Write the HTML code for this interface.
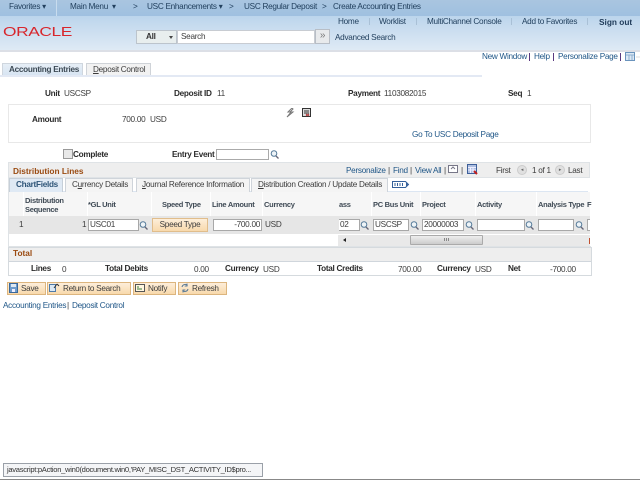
<!DOCTYPE html>
<html><head><meta charset="utf-8"><style>
html,body{margin:0;padding:0;background:#fff;width:640px;height:480px;overflow:hidden}
body{font-family:"Liberation Sans",Arial,sans-serif;font-size:8.2px;letter-spacing:-.28px;color:#3c3c3c;position:relative}
#w{position:absolute;left:0;top:0;width:640px;height:480px;overflow:hidden;filter:blur(.3px)}
.a,.t,.b,.l,.n,.i,.h{position:absolute;white-space:nowrap}
.t{line-height:10px;color:#3c3c3c}
.b{line-height:10px;font-weight:bold;color:#2b2b2b}
.l{line-height:10px;color:#1f5687}
.n{line-height:10px;color:#22405e}
.h{line-height:10px;font-weight:bold;color:#3f4a55;font-size:7.5px}
.i{height:10px;background:#fff;border:1px solid #a8a8a8;line-height:10px;font-size:8.2px;color:#3c3c3c;padding:0 1px;box-sizing:content-box}
.g{position:absolute;width:9px;height:9px}
.bt{position:absolute;height:11px;top:282px;background:linear-gradient(#fdeeda,#f8d9ac);border:1px solid #dcb57e;line-height:11px;color:#3c3c3c;box-sizing:content-box}
</style></head><body><div id="w">

<div class="a" style="left:0;top:0;width:640px;height:16px;background:linear-gradient(#a9c5e0,#9fc0e0)"></div>
<div class="a" style="left:0;top:16px;width:640px;height:34px;background:linear-gradient(#bcd5ec,#dfeaf5)"></div>
<div class="a" style="left:0;top:50px;width:640px;height:2px;background:#dcdfe6"></div>
<div class="a" style="left:56px;top:0;width:1px;height:16px;background:#c8dcee"></div>

<div class="n" style="left:9px;top:2px">Favorites ▾</div>
<div class="n" style="left:70px;top:2px">Main Menu &nbsp;▾</div>
<div class="n" style="left:133px;top:2px">&gt;</div>
<div class="n" style="left:147px;top:2px">USC Enhancements ▾</div>
<div class="n" style="left:229px;top:2px">&gt;</div>
<div class="n" style="left:244px;top:2px">USC Regular Deposit</div>
<div class="n" style="left:322px;top:2px">&gt;</div>
<div class="n" style="left:333px;top:2px">Create Accounting Entries</div>

<div class="n" style="left:338px;top:17px">Home</div>
<div class="a" style="left:369px;top:18px;width:1px;height:7px;background:#a9c0d6"></div>
<div class="n" style="left:379px;top:17px">Worklist</div>
<div class="a" style="left:416px;top:18px;width:1px;height:7px;background:#a9c0d6"></div>
<div class="n" style="left:427px;top:17px">MultiChannel Console</div>
<div class="a" style="left:511px;top:18px;width:1px;height:7px;background:#a9c0d6"></div>
<div class="n" style="left:522px;top:17px">Add to Favorites</div>
<div class="a" style="left:587px;top:18px;width:1px;height:7px;background:#a9c0d6"></div>
<div class="n" style="left:599px;top:17px;font-weight:bold;color:#1f3a58;font-size:8.3px;letter-spacing:0">Sign out</div>

<svg class="a" style="left:3px;top:26px" width="70" height="11" viewBox="0 0 70 11"><text x="0" y="10" font-family="Liberation Sans" font-size="12.5" fill="#d8262c" textLength="69" lengthAdjust="spacingAndGlyphs">ORACLE</text></svg>

<div class="a" style="left:136px;top:30px;width:41px;height:14px;background:#e8eeee;border:1px solid #bcc4cc;box-sizing:border-box"></div>
<div class="b" style="left:146px;top:32px;color:#333">All</div>
<div class="a" style="left:169px;top:36px;width:0;height:0;border-left:2.5px solid transparent;border-right:2.5px solid transparent;border-top:3px solid #444"></div>
<div class="a" style="left:177px;top:30px;width:138px;height:14px;background:#fff;border:1px solid #c8ccd2;box-sizing:border-box"></div>
<div class="t" style="left:181px;top:32px">Search</div>
<div class="a" style="left:315px;top:29px;width:15px;height:15px;background:#e8eaec;border:1px solid #b8bec6;box-sizing:border-box;color:#777;text-align:center;line-height:12px;font-size:10px">»</div>
<div class="n" style="left:335px;top:33px">Advanced Search</div>

<div class="l" style="left:482px;top:52px">New Window</div>
<div class="a" style="left:529px;top:53px;width:1px;height:8px;background:#5a3a80"></div>
<div class="l" style="left:534px;top:52px">Help</div>
<div class="a" style="left:553px;top:53px;width:1px;height:8px;background:#5a3a80"></div>
<div class="l" style="left:558px;top:52px">Personalize Page</div>
<div class="a" style="left:620px;top:53px;width:1px;height:8px;background:#5a3a80"></div>
<svg class="a" style="left:625px;top:52px" width="15" height="10"><rect x=".5" y=".5" width="9" height="8" fill="#dbe8f4" stroke="#6a94bd"/><path d="M1 3h8M4 3v5M7 3v5" stroke="#8fb0d0"/><path d="M11 5h4" stroke="#ddd"/></svg>

<div class="a" style="left:2px;top:63px;width:81px;height:13px;background:linear-gradient(#e6eef6,#d6e4f2);border:1px solid #cfd6de;border-bottom:0;box-sizing:border-box"></div>
<div class="b" style="left:9px;top:65px;color:#3d4a55">Accounting Entries</div>
<div class="a" style="left:86px;top:63px;width:65px;height:13px;background:#f2f2f2;border:1px solid #cfd3d8;border-bottom:0;box-sizing:border-box"></div>
<div class="t" style="left:93px;top:65px"><u>D</u>eposit Control</div>
<div class="a" style="left:0;top:75px;width:482px;height:2px;background:#e3e9f4"></div>

<div class="b" style="left:45px;top:89px">Unit</div><div class="t" style="left:64px;top:89px">USCSP</div>
<div class="b" style="left:174px;top:89px">Deposit ID</div><div class="t" style="left:217px;top:89px">11</div>
<div class="b" style="left:348px;top:89px">Payment</div><div class="t" style="left:384px;top:89px">1103082015</div>
<div class="b" style="left:508px;top:89px">Seq</div><div class="t" style="left:527px;top:89px">1</div>

<div class="a" style="left:8px;top:104px;width:583px;height:39px;border:1px solid #e8e8e8;box-sizing:border-box"></div>
<div class="b" style="left:32px;top:115px">Amount</div>
<div class="t" style="left:122px;top:115px">700.00</div><div class="t" style="left:150px;top:115px">USD</div>
<svg class="a" style="left:286px;top:108px" width="9" height="10"><path d="M6 0L2 4l3 0L1 9l6-5-3 0 3-3z" fill="none" stroke="#777" stroke-width="1"/></svg>
<svg class="a" style="left:302px;top:108px" width="10" height="10"><rect x=".5" y=".5" width="8" height="8" fill="#ddd" stroke="#333"/><path d="M2 3h5M2 5h5" stroke="#333"/><path d="M4 6l3 2M7 6l-3 2" stroke="#b03030"/></svg>
<div class="l" style="left:412px;top:130px">Go To USC Deposit Page</div>

<div class="a" style="left:63px;top:149px;width:8px;height:8px;background:#e8e8e8;border:1px solid #999"></div>
<div class="b" style="left:73px;top:150px">Complete</div>
<div class="b" style="left:172px;top:150px">Entry Event</div>
<div class="a" style="left:216px;top:149px;width:53px;height:11px;background:#fff;border:1px solid #aaa;box-sizing:border-box"></div>
<svg class="g" style="left:270px;top:150px"><circle cx="4" cy="3.5" r="2.8" fill="#eef4f8" stroke="#557a99"/><path d="M6 6l2.5 2.5" stroke="#667" stroke-width="1.3"/></svg>

<div class="a" style="left:8px;top:162px;width:582px;height:16px;background:#eeeeee;border:1px solid #dfe3e6;box-sizing:border-box"></div>
<div class="b" style="left:13px;top:166px;color:#9a4a10;font-size:8.3px;letter-spacing:0">Distribution Lines</div>
<div class="l" style="left:346px;top:166px">Personalize</div><div class="t" style="left:388px;top:166px">|</div>
<div class="l" style="left:393px;top:166px">Find</div><div class="t" style="left:410px;top:166px">|</div>
<div class="l" style="left:415px;top:166px">View All</div><div class="t" style="left:444px;top:166px">|</div>
<svg class="a" style="left:448px;top:164px" width="11" height="10"><rect x=".5" y="1.5" width="9" height="7" fill="#fff" stroke="#778"/><path d="M3 5l2-2 2 2" stroke="#778" fill="none"/></svg>
<div class="t" style="left:461px;top:166px">|</div>
<svg class="a" style="left:467px;top:164px" width="11" height="11"><rect x=".5" y=".5" width="9" height="9" fill="#aebfe0" stroke="#3d5f9a"/><path d="M1 3.5h8M1 6h8M3.5 3v6M6 3v6" stroke="#eef"/><path d="M7 7l3 3" stroke="#c02020" stroke-width="2"/></svg>
<div class="t" style="left:496px;top:166px">First</div>
<div class="a" style="left:517px;top:165px;width:8px;height:8px;border-radius:50%;background:#e0e0e0;border:1px solid #ccc;color:#666;font-size:5px;line-height:8px;text-align:center">◂</div>
<div class="t" style="left:532px;top:166px">1 of 1</div>
<div class="a" style="left:555px;top:165px;width:8px;height:8px;border-radius:50%;background:#e0e0e0;border:1px solid #ccc;color:#666;font-size:5px;line-height:8px;text-align:center">▸</div>
<div class="t" style="left:568px;top:166px">Last</div>

<div class="a" style="left:8px;top:178px;width:1px;height:69px;background:#dfe3e6"></div>
<div class="a" style="left:9px;top:191px;width:579px;height:1px;background:#dce6f2"></div>
<div class="a" style="left:9px;top:178px;width:54px;height:14px;background:#dfe9f4;border:1px solid #c6cfd8;border-bottom:0;box-sizing:border-box"></div>
<div class="b" style="left:16px;top:180px;color:#2f5578">ChartFields</div>
<div class="a" style="left:65px;top:178px;width:68px;height:14px;background:#f4f4f4;border:1px solid #cfd4da;border-bottom:0;box-sizing:border-box"></div>
<div class="t" style="left:72px;top:180px">C<u>u</u>rrency Details</div>
<div class="a" style="left:136px;top:178px;width:114px;height:14px;background:#f4f4f4;border:1px solid #cfd4da;border-bottom:0;box-sizing:border-box"></div>
<div class="t" style="left:142px;top:180px"><u>J</u>ournal Reference Information</div>
<div class="a" style="left:251px;top:178px;width:137px;height:14px;background:#f4f4f4;border:1px solid #cfd4da;border-bottom:0;box-sizing:border-box"></div>
<div class="t" style="left:258px;top:180px"><u>D</u>istribution Creation / Update Details</div>
<svg class="a" style="left:392px;top:179px" width="18" height="11"><path d="M.5 2.5h13l3 3-3 3H.5z" fill="#fff" stroke="#35609a"/><path d="M3 4v3M5.5 4v3M8 4v3M10.5 4v3" stroke="#35609a"/><path d="M14 3.5l2 2-2 2z" fill="#35609a"/></svg>

<div class="a" style="left:9px;top:192px;width:581px;height:24px;background:#f6f6f6"></div>
<div class="a" style="left:9px;top:216px;width:581px;height:18px;background:#e6e6e6"></div>
<div style="position:absolute;left:23px;top:192px;width:1px;height:24px;background:#fff"></div>
<div style="position:absolute;left:87px;top:192px;width:1px;height:24px;background:#fff"></div>
<div style="position:absolute;left:151px;top:192px;width:1px;height:24px;background:#fff"></div>
<div style="position:absolute;left:210px;top:192px;width:1px;height:24px;background:#fff"></div>
<div style="position:absolute;left:262px;top:192px;width:1px;height:24px;background:#fff"></div>
<div style="position:absolute;left:371px;top:192px;width:1px;height:24px;background:#fff"></div>
<div style="position:absolute;left:420px;top:192px;width:1px;height:24px;background:#fff"></div>
<div style="position:absolute;left:475px;top:192px;width:1px;height:24px;background:#fff"></div>
<div style="position:absolute;left:536px;top:192px;width:1px;height:24px;background:#fff"></div>

<div class="h" style="left:25px;top:196px;line-height:9px">Distribution<br>Sequence</div>
<div class="h" style="left:88px;top:200px">*GL Unit</div>
<div class="h" style="left:162px;top:200px">Speed Type</div>
<div class="h" style="left:212px;top:200px">Line Amount</div>
<div class="h" style="left:264px;top:200px">Currency</div>
<div class="h" style="left:339px;top:200px">ass</div>
<div class="h" style="left:373px;top:200px">PC Bus Unit</div>
<div class="h" style="left:422px;top:200px">Project</div>
<div class="h" style="left:477px;top:200px">Activity</div>
<div class="h" style="left:538px;top:200px">Analysis Type</div>
<div class="h" style="left:587px;top:200px">F</div>

<div class="t" style="left:19px;top:220px">1</div>
<div class="t" style="left:82px;top:220px">1</div>
<div class="i" style="left:88px;top:219px;width:47px">USC01</div>
<svg class="g" style="left:139px;top:221px"><circle cx="4" cy="3.5" r="2.8" fill="#eef4f8" stroke="#557a99"/><path d="M6 6l2.5 2.5" stroke="#667" stroke-width="1.3"/></svg>
<div class="a" style="left:152px;top:218px;width:56px;height:14px;background:linear-gradient(#fdeeda,#f8d9ac);border:1px solid #e0bd8c;box-sizing:border-box;text-align:center;line-height:12px;color:#3c3c3c">Speed Type</div>
<div class="i" style="left:213px;top:219px;width:45px;text-align:right">-700.00</div>
<div class="t" style="left:265px;top:220px">USD</div>
<div class="i" style="left:339px;top:219px;width:18px;border-left:0">02</div>
<svg class="g" style="left:360px;top:221px"><circle cx="4" cy="3.5" r="2.8" fill="#eef4f8" stroke="#557a99"/><path d="M6 6l2.5 2.5" stroke="#667" stroke-width="1.3"/></svg>
<div class="i" style="left:373px;top:219px;width:32px">USCSP</div>
<svg class="g" style="left:410px;top:221px"><circle cx="4" cy="3.5" r="2.8" fill="#eef4f8" stroke="#557a99"/><path d="M6 6l2.5 2.5" stroke="#667" stroke-width="1.3"/></svg>
<div class="i" style="left:422px;top:219px;width:38px">20000003</div>
<svg class="g" style="left:465px;top:221px"><circle cx="4" cy="3.5" r="2.8" fill="#eef4f8" stroke="#557a99"/><path d="M6 6l2.5 2.5" stroke="#667" stroke-width="1.3"/></svg>
<div class="i" style="left:477px;top:219px;width:44px"></div>
<svg class="g" style="left:525px;top:221px"><circle cx="4" cy="3.5" r="2.8" fill="#eef4f8" stroke="#557a99"/><path d="M6 6l2.5 2.5" stroke="#667" stroke-width="1.3"/></svg>
<div class="i" style="left:538px;top:219px;width:32px"></div>
<svg class="g" style="left:575px;top:221px"><circle cx="4" cy="3.5" r="2.8" fill="#eef4f8" stroke="#557a99"/><path d="M6 6l2.5 2.5" stroke="#667" stroke-width="1.3"/></svg>
<div class="a" style="left:587px;top:219px;width:3px;height:12px;background:#fff;border:1px solid #aaa;border-right:0;box-sizing:border-box"></div>

<div class="a" style="left:338px;top:235px;width:252px;height:11px;background:#e9e9e9"></div>
<div class="a" style="left:343px;top:238px;width:0;height:0;border-top:2.5px solid transparent;border-bottom:2.5px solid transparent;border-right:3px solid #222"></div>
<div class="a" style="left:410px;top:235px;width:73px;height:10px;background:linear-gradient(#eee,#ccc);border:1px solid #aaa;box-sizing:border-box;border-radius:1px"></div>
<div class="a" style="left:444px;top:238px;width:5px;height:3px;background:repeating-linear-gradient(90deg,#888 0 1px,transparent 1px 2px)"></div>
<div class="a" style="left:589px;top:238px;width:1px;height:6px;background:#c05030"></div>
<div class="a" style="left:8px;top:246px;width:583px;height:1px;background:#dfe3e6"></div>

<div class="a" style="left:8px;top:247px;width:584px;height:29px;border:1px solid #d5dade;box-sizing:border-box"></div>
<div class="a" style="left:9px;top:248px;width:582px;height:13px;background:#eeeeee;border-bottom:1px solid #d0d6dc;box-sizing:content-box"></div>
<div class="b" style="left:13px;top:248px;color:#9a4a10;font-size:8.3px;letter-spacing:0">Total</div>
<div class="b" style="left:31px;top:264px">Lines</div><div class="t" style="left:62px;top:265px">0</div>
<div class="b" style="left:105px;top:264px">Total Debits</div><div class="t" style="left:194px;top:265px">0.00</div>
<div class="b" style="left:225px;top:264px">Currency</div><div class="t" style="left:263px;top:265px">USD</div>
<div class="b" style="left:317px;top:264px">Total Credits</div><div class="t" style="left:398px;top:265px">700.00</div>
<div class="b" style="left:437px;top:264px">Currency</div><div class="t" style="left:475px;top:265px">USD</div>
<div class="b" style="left:508px;top:264px">Net</div><div class="t" style="left:550px;top:265px">-700.00</div>

<div class="bt" style="left:7px;width:37px"><span style="position:absolute;left:13px">Save</span></div>
<svg class="a" style="left:9px;top:283px" width="9" height="10"><rect x=".5" y=".5" width="8" height="9" fill="#6f9ccc" stroke="#38689c"/><rect x="2" y="1" width="5" height="3" fill="#dde8f2"/><rect x="3" y="6" width="3" height="3" fill="#eef"/></svg>
<div class="bt" style="left:47px;width:82px"><span style="position:absolute;left:15px">Return to Search</span></div>
<svg class="a" style="left:49px;top:283px" width="11" height="10"><rect x=".5" y="1.5" width="6" height="7" fill="#dbe8f4" stroke="#4d7aa8"/><path d="M5 5l3-4M8 1l2 2" stroke="#333" fill="none"/></svg>
<div class="bt" style="left:133px;width:41px"><span style="position:absolute;left:14px">Notify</span></div>
<svg class="a" style="left:135px;top:283px" width="11" height="10"><rect x=".5" y="1.5" width="9" height="7" fill="#fff6e0" stroke="#555"/><path d="M2 4h2M2 6h5" stroke="#3a7a3a"/></svg>
<div class="bt" style="left:178px;width:47px"><span style="position:absolute;left:13px">Refresh</span></div>
<svg class="a" style="left:180px;top:283px" width="10" height="10"><path d="M2 4a3.2 3.2 0 0 1 5.5-1.5M8 6a3.2 3.2 0 0 1-5.5 1.5" fill="none" stroke="#5a7a95"/><path d="M7 0.5v2.5H4.7M3 9.5V7h2.3" fill="none" stroke="#5a7a95"/></svg>

<div class="l" style="left:3px;top:301px">Accounting Entries</div>
<div class="t" style="left:67px;top:301px">|</div>
<div class="l" style="left:72px;top:301px">Deposit Control</div>

<div class="a" style="left:3px;top:463px;width:260px;height:14px;background:#f4f5f7;border:1px solid #9aa0a8;box-sizing:border-box;line-height:12px;padding-left:3px;color:#333;white-space:nowrap;overflow:hidden;font-size:7.6px;letter-spacing:-.3px">javascript:pAction_win0(document.win0,'PAY_MISC_DST_ACTIVITY_ID$pro...</div>
<div class="a" style="left:0;top:479px;width:640px;height:1px;background:#888"></div>
</div></body></html>
